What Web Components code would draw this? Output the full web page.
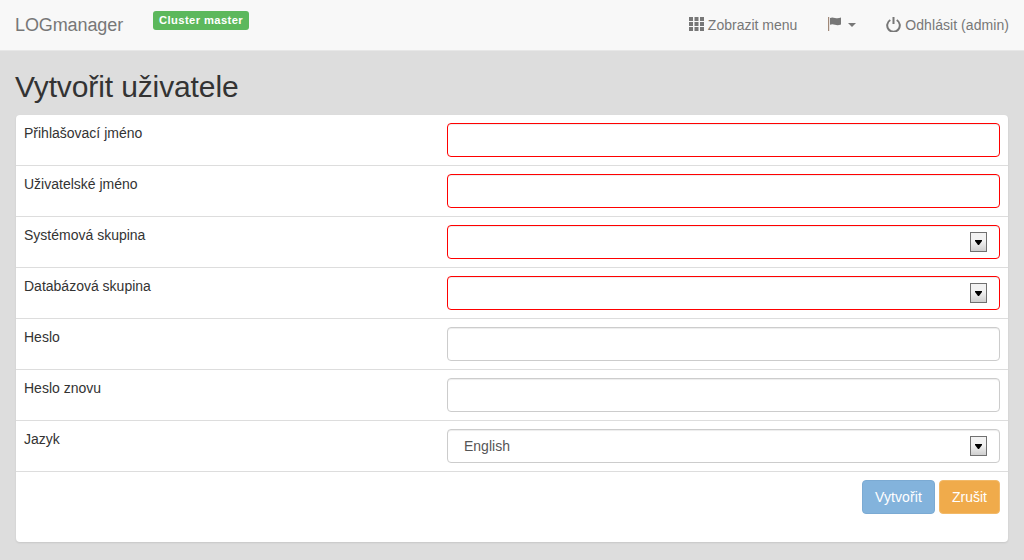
<!DOCTYPE html>
<html lang="cs">
<head>
<meta charset="utf-8">
<title>LOGmanager</title>
<style>
    html, body { margin: 0; height: 100%; }
    body {
        background: #ddd;
        font-family: "Liberation Sans", Arial, sans-serif;
        font-size: 14px;
        line-height: 20px;
        color: #333;
        overflow: hidden;
    }
</style>
</head>
<body>
<log-navbar></log-navbar>
<log-page heading="Vytvořit uživatele">
    <form-row label="Přihlašovací jméno"><text-field required></text-field></form-row>
    <form-row label="Uživatelské jméno"><text-field required></text-field></form-row>
    <form-row label="Systémová skupina"><select-field required></select-field></form-row>
    <form-row label="Databázová skupina"><select-field required></select-field></form-row>
    <form-row label="Heslo"><text-field type="password"></text-field></form-row>
    <form-row label="Heslo znovu"><text-field type="password"></text-field></form-row>
    <form-row label="Jazyk"><select-field value="English"></select-field></form-row>
</log-page>

<script>
class LogNavbar extends HTMLElement {
    constructor() {
        super();
        this.attachShadow({ mode: 'open' });
        this.shadowRoot.innerHTML = `
            <style>
                :host {
                    display: flex;
                    height: 50px;
                    background: #f8f8f8;
                    border-bottom: 1px solid #e7e7e7;
                    color: #777;
                }
                .brand { font-size: 18px; line-height: 50px; margin-left: 15px; letter-spacing: -.1px; }
                .badge {
                    align-self: flex-start;
                    margin: 11px 0 0 30px;
                    height: 19px;
                    box-sizing: border-box;
                    padding: 3px 6px 0;
                    background: #5cb85c;
                    color: #fff;
                    border-radius: 3px;
                    font-size: 11.2px;
                    line-height: 13px;
                    font-weight: bold;
                    letter-spacing: .4px;
                }
                nav { margin-left: auto; display: flex; margin-right: 15px; }
                .item { display: flex; align-items: center; height: 50px; white-space: nowrap; }
                .menu { margin-right: 31px; }
                .menu svg { margin: 0 4px 2px 0; }
                .flag { margin-right: 30px; }
                .flag svg { margin-bottom: 2px; }
                .flag i {
                    margin-left: 6px;
                    border-top: 4px solid #777;
                    border-left: 4px solid transparent;
                    border-right: 4px solid transparent;
                }
                .logout { letter-spacing: .06px; }
                .logout svg { margin: 0 4px 2px 0; }
            </style>
            <span class="brand">LOGmanager</span>
            <span class="badge">Cluster master</span>
            <nav>
                <span class="item menu">
                    <svg width="15" height="14" viewBox="0 0 15 14" fill="#777">
                        <path d="M0 0h4v4H0zM5.500 0h4v4h-4zM11 0h4v4h-4zM0 5h4v4H0zM5.500 5h4v4h-4zM11 5h4v4h-4zM0 10h4v4H0zM5.500 10h4v4h-4zM11 10h4v4h-4z"/>
                    </svg>
                    Zobrazit menu
                </span>
                <span class="item flag">
                    <svg width="14" height="14" viewBox="0 0 14 14">
                        <path d="M0 0h1.200v14H0z" fill="#a08878"/>
                        <path d="M2 1c2-1 3-.6 5 0 2 .6 4 .4 6-.4V7.500c-2 .8-4 1-6 .3-2-.6-3-.9-5 0z" fill="#777"/>
                    </svg>
                    <i></i>
                </span>
                <span class="item logout">
                    <svg width="15" height="15" viewBox="0 0 15 15" fill="none" stroke="#777" stroke-width="2">
                        <path d="M4.300 3a6.300 6.300 0 1 0 6.400 0"/>
                        <path d="M7.500 0v7"/>
                    </svg>
                    Odhlásit (admin)
                </span>
            </nav>
        `;
    }
}

class LogPage extends HTMLElement {
    constructor() {
        super();
        this.attachShadow({ mode: 'open' });
        this.shadowRoot.innerHTML = `
            <style>
                :host { display: block; padding: 0 16px 0 16px; }
                h1 {
                    font-size: 30px;
                    line-height: 33px;
                    font-weight: 500;
                    color: #333;
                    letter-spacing: -.12px;
                    margin: 19px 0 12px -1px;
                }
                .card {
                    display: flex;
                    flex-direction: column;
                    height: 427px;
                    background: #fff;
                    border-radius: 4px;
                    box-shadow: 0 1px 2px rgba(0,0,0,.1);
                }
                .actions {
                    display: flex;
                    justify-content: flex-end;
                    gap: 4px;
                    padding: 8px 8px 0 0;
                }
                button {
                    height: 34px;
                    box-sizing: border-box;
                    padding: 0 12px;
                    font: inherit;
                    color: #fff;
                    border: 1px solid;
                    border-radius: 4px;
                    opacity: .65;
                }
                .primary { background: #428bca; border-color: #357ebd; min-width: 73px; letter-spacing: .1px; }
                .warning { background: #eb8f0f; border-color: #eea236; opacity: .75; }
            </style>
            <h1></h1>
            <div class="card">
                <slot></slot>
                <div class="actions">
                    <button class="primary" type="button">Vytvořit</button>
                    <button class="warning" type="button">Zrušit</button>
                </div>
            </div>
        `;
        this.shadowRoot.querySelector('h1').textContent = this.getAttribute('heading');
    }
}

class FormRow extends HTMLElement {
    constructor() {
        super();
        this.attachShadow({ mode: 'open' });
        this.shadowRoot.innerHTML = `
            <style>
                :host {
                    display: grid;
                    grid-template-columns: 431px 553px;
                    height: 51px;
                    box-sizing: border-box;
                    padding-top: 8px;
                    border-bottom: 1px solid #ddd;
                }
                label { padding-left: 8px; }
            </style>
            <label></label>
            <div><slot></slot></div>
        `;
        this.shadowRoot.querySelector('label').textContent = this.getAttribute('label');
    }
}

const fieldStyles = `
    :host { display: block; position: relative; height: 34px; }
    input, select {
        display: block;
        width: 100%;
        height: 34px;
        box-sizing: border-box;
        margin: 0;
        padding: 0 12px;
        font: inherit;
        color: #555;
        background: #fff;
        border: 1px solid #ccc;
        border-radius: 4px;
        box-shadow: inset 0 1px 1px rgba(0,0,0,.075);
        outline: none;
    }
    :host([required]) input, :host([required]) select { border-color: #f00; }
`;

class TextField extends HTMLElement {
    constructor() {
        super();
        this.attachShadow({ mode: 'open' });
        this.shadowRoot.innerHTML = `
            <style>${fieldStyles}</style>
            <input type="${this.getAttribute('type') || 'text'}">
        `;
    }
}

class SelectField extends HTMLElement {
    constructor() {
        super();
        this.attachShadow({ mode: 'open' });
        const value = this.getAttribute('value') || '';
        this.shadowRoot.innerHTML = `
            <style>
                ${fieldStyles}
                select { appearance: none; -webkit-appearance: none; padding-left: 16px; }
                /* old-style native arrow button on top of the select */
                .arrow {
                    position: absolute;
                    top: 7px;
                    right: 13px;
                    width: 17px;
                    height: 20px;
                    box-sizing: border-box;
                    border: 1px solid #707070;
                    background: linear-gradient(#f2f2f2 45%, #cfcfcf);
                    display: flex;
                    align-items: center;
                    justify-content: center;
                    pointer-events: none;
                }
            </style>
            <select><option>${value}</option></select>
            <span class="arrow">
                <svg width="7" height="5" viewBox="0 0 7 5"><path d="M0 0h7v1L4 5H3L0 1z" fill="#000"/></svg>
            </span>
        `;
    }
}

customElements.define('log-navbar', LogNavbar);
customElements.define('log-page', LogPage);
customElements.define('form-row', FormRow);
customElements.define('text-field', TextField);
customElements.define('select-field', SelectField);
</script>
</body>
</html>
